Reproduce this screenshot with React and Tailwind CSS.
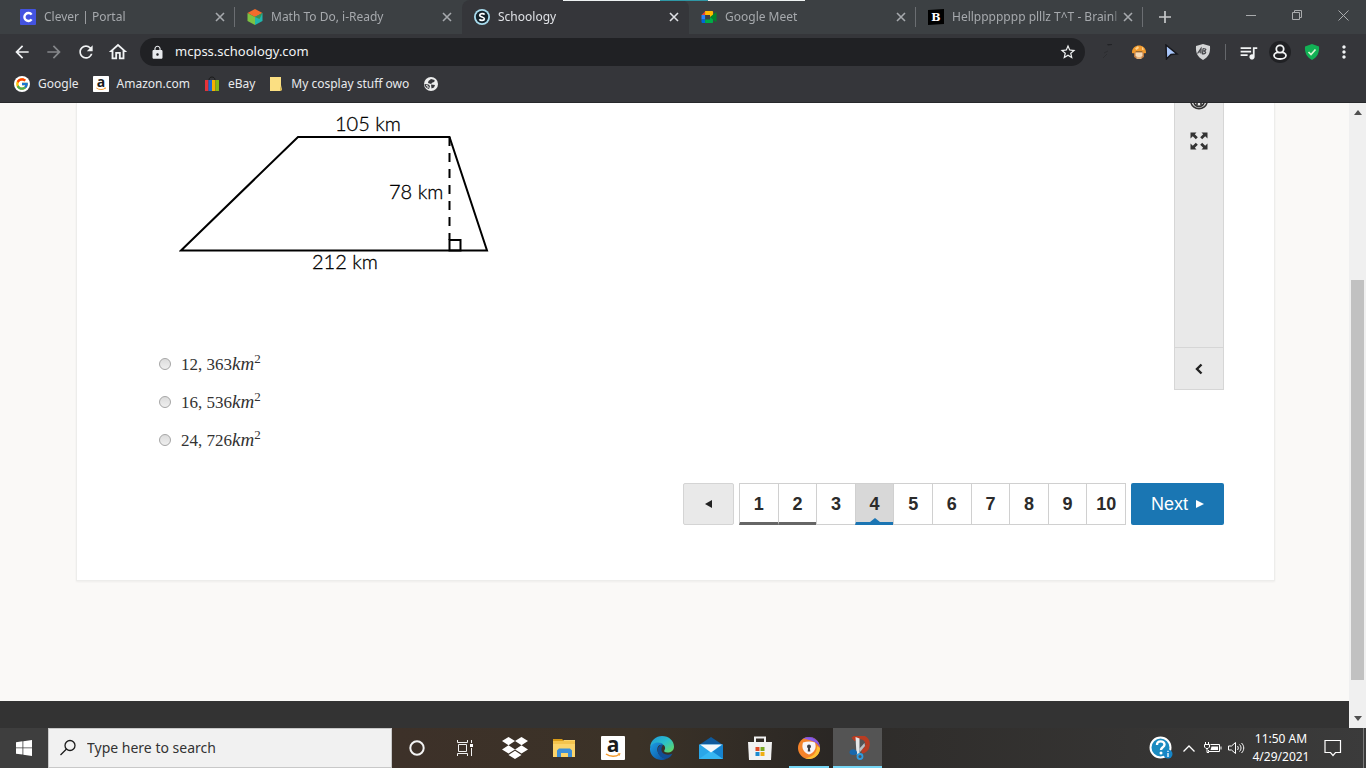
import { useState } from "react";
import { FcGoogle } from "react-icons/fc";
import { FaDropbox } from "react-icons/fa";
import {
  MdArrowBack,
  MdArrowForward,
  MdRefresh,
  MdOutlineHome,
  MdLock,
  MdStarBorder,
  MdQueueMusic,
  MdMoreVert,
} from "react-icons/md";

/* ---------- favicons ---------- */

const CleverIcon = () => (
  <svg width="16" height="16" viewBox="0 0 16 16">
    <rect width="16" height="16" rx="1" fill="#4353e0" />
    <path
      d="M11.6 5.6A4 4 0 1 0 11.6 10.4"
      fill="none"
      stroke="#fff"
      strokeWidth="2.4"
    />
  </svg>
);

const ReadyIcon = () => (
  <svg width="16" height="16" viewBox="0 0 16 16">
    <path d="M8 0l7.5 4L8 8 .5 4z" fill="#f26b2c" />
    <path d="M.5 4L8 8v8L.5 12z" fill="#7cc243" />
    <path d="M15.5 4L8 8v8l7.5-4z" fill="#1fb5ad" />
    <path d="M8 8l7.5-4-3 6z" fill="#3d8f4e" />
  </svg>
);

const SchoologyIcon = () => (
  <svg width="16" height="16" viewBox="0 0 16 16">
    <circle cx="8" cy="8" r="8" fill="#a9dcee" />
    <circle cx="8" cy="8" r="6.2" fill="#15232b" />
    <path
      d="M10.6 5.6C9.8 4.3 5.9 4.2 5.7 6.2c-.1 2 4.8 1.5 4.7 3.7-.2 2-4 2-5 .3"
      fill="none"
      stroke="#fff"
      strokeWidth="1.7"
    />
  </svg>
);

const MeetIcon = () => (
  <svg width="16" height="16" viewBox="0 0 16 16">
    <path d="M.5 6L4.5 2v4z" fill="#ea4335" />
    <path d="M.5 6h3.6v4.5H.5z" fill="#2684fc" />
    <path d="M.5 10.5h3.6V14H1.5a1 1 0 0 1-1-1z" fill="#0066da" />
    <path d="M4.1 2h7a1 1 0 0 1 1 1v4L9 8.5V6H4.1z" fill="#ffba00" />
    <path d="M4.1 10.5H9V8.5l3.1 1V13a1 1 0 0 1-1 1h-7z" fill="#00ac47" />
    <path d="M9 8l5.6-4.6c.4-.3.9 0 .9.5v8.4c0 .5-.5.7-.9.4z" fill="#00832d" />
  </svg>
);

const BrainlyIcon = () => (
  <svg width="16" height="16" viewBox="0 0 16 16">
    <path d="M0 1l16-1v15L0 16z" fill="#000" />
    <text
      x="8"
      y="12"
      textAnchor="middle"
      fontFamily="DejaVu Serif, serif"
      fontWeight="700"
      fontSize="11"
      fill="#fff"
    >
      B
    </text>
  </svg>
);

const AmazonIcon = ({ size }) => (
  <svg width={size} height={size} viewBox="0 0 24 24" overflow="visible">
    <rect width="24" height="24" rx="1" fill="#fff" />
    <text
      x="12"
      y="16"
      textAnchor="middle"
      fontFamily="Open Sans, sans-serif"
      fontWeight="700"
      fontSize="21"
      fill="#1b1b1b"
    >
      a
    </text>
    <path d="M5 18c4 3 10 3 13 .5" fill="none" stroke="#f59b2c" strokeWidth="1.5" />
    <path d="M16.5 17.5l3-.4-.8 2.8z" fill="#f59b2c" />
  </svg>
);

const EbayIcon = () => (
  <svg width="16" height="16" viewBox="0 0 16 16">
    <path d="M5 4c0-4 6-4 6 0" fill="none" stroke="#1b1b1b" strokeWidth="1" />
    <path d="M1 4h3.5v11H1z" fill="#e53238" />
    <path d="M4.5 4H8v11H4.5z" fill="#1f66d0" />
    <path d="M8 4h3.5v11H8z" fill="#f5af02" />
    <path d="M11.5 4H15v11h-3.5z" fill="#86b817" />
  </svg>
);

const NoteIcon = () => (
  <svg width="14" height="16" viewBox="0 0 14 16">
    <path d="M1 1h11v8l1 5-2 1H1z" fill="#fbdf82" />
    <path d="M11 10l2 4-2 1z" fill="#d9b851" />
  </svg>
);

const GlobeIcon = () => (
  <svg width="16" height="16" viewBox="0 0 16 16">
    <circle cx="8" cy="8" r="7" fill="#eceded" />
    <path d="M8 3l3.5 1c.5 1.500-.5 2.500-2 2.500L8 8 5 7l.5-2z" fill="#35363a" />
    <path d="M1.500 8l4 .5L7 10l-1 3C3.500 12.500 1.500 10.500 1.500 8z" fill="#35363a" />
    <path d="M8 8.500l4 .5-1 2.500-2.500 1z" fill="#35363a" />
    <path d="M3 9.500l2 .5v2" fill="none" stroke="#eceded" />
  </svg>
);

/* ---------- toolbar extensions ---------- */

const DimExtIcon = () => (
  <svg width="16" height="16" viewBox="0 0 16 16">
    <path d="M8 0l5-.5V1L9 1.500z" fill="#222326" />
    <path d="M4 14l4-4M5 9l4-2" stroke="#2c2d30" strokeWidth="1" />
  </svg>
);

const MushroomIcon = () => (
  <svg width="16" height="16" viewBox="0 0 16 16">
    <path d="M3 8h10v4.500c-1 3-9 3-10 0z" fill="#c07c42" />
    <path d="M4.500 8.500h7V12c-1 1.500-6 1.500-7 0z" fill="#f6d9b4" />
    <path d="M5.500 13h5v2h-5z" fill="#e8b37c" />
    <path d="M1 9C.5-1 15.500-1 15 9c-2 1-3-.5-4-1.500H5C4 8.500 3 10 1 9z" fill="#f09a2e" />
    <path d="M4 4.500l3-2.500 1 2-2.500 2zM11 2.500l2 3-2 .5z" fill="#ffd28c" />
  </svg>
);

const CursorIcon = () => (
  <svg width="16" height="16" viewBox="0 0 16 16">
    <path d="M3 1l11 9-6 .5L3.500 15z" fill="#a9c7fb" stroke="#16171c" strokeWidth="1.500" />
  </svg>
);

const AdShieldIcon = () => (
  <svg width="16" height="16" viewBox="0 0 16 16">
    <path d="M8 0l7 2c.5 7-1.500 11-7 14C2.500 13 .5 9 1 2z" fill="#d4d5d6" />
    <path
      d="M2.500 9.500l3.500-5v5M4 8h2M8 4.500L7.500 10c4 0 4-2.500 1-3 3-.5 3.500-2.500-.5-2.500"
      fill="none"
      stroke="#46474b"
      strokeWidth="1.200"
    />
  </svg>
);

const ProfileIcon = () => (
  <svg width="22" height="22" viewBox="0 0 22 22">
    <circle cx="11" cy="11" r="11" fill="#202124" />
    <ellipse cx="11" cy="14.500" rx="6" ry="3.500" fill="#202124" stroke="#f1f3f4" strokeWidth="1.800" />
    <circle cx="11" cy="8" r="3.700" fill="#202124" stroke="#f1f3f4" strokeWidth="1.800" />
  </svg>
);

const CheckShieldIcon = () => (
  <svg width="16" height="16" viewBox="0 0 16 16">
    <path d="M8 0l7 2.500c.5 6-1.500 10.500-7 13.500C2.500 13 .5 8.500 1 2.500z" fill="#12b155" />
    <path d="M4.500 8l2.500 2.500 4.500-5" fill="none" stroke="#d8f5d0" strokeWidth="1.700" />
  </svg>
);

/* ---------- taskbar ---------- */

const WindowsIcon = () => (
  <svg width="16" height="16" viewBox="0 0 16 16" fill="#fff">
    <path d="M0 2.200l6.500-.9v6.200H0zM7.300 1.200L16 0v7.500H7.300zM0 8.300h6.500v6.300L0 13.700zM7.300 8.300H16V16l-8.700-1.200z" />
  </svg>
);

const SearchIcon = () => (
  <svg width="18" height="18" viewBox="0 0 18 18" fill="none" stroke="#1b1b1b" strokeWidth="1.300">
    <circle cx="11" cy="6.500" r="5" />
    <path d="M7.500 10L1.500 16" />
  </svg>
);

const CortanaIcon = () => (
  <svg width="18" height="18" viewBox="0 0 18 18">
    <circle cx="9" cy="9" r="6.700" fill="none" stroke="#f4f4f4" strokeWidth="2" />
  </svg>
);

const TaskViewIcon = () => (
  <svg width="18" height="16" viewBox="0 0 18 16" fill="none" stroke="#f0f0f0">
    <path d="M.5 0v2.500h10V0M1.500 4.500h8v7h-8zM.5 16v-2.500h10V16M14.500 0v3M14.500 8v8" />
    <path d="M13 4h3v3h-3z" fill="#fff" stroke="none" />
  </svg>
);

const FolderIcon = () => (
  <svg width="22" height="20" viewBox="0 0 22 20">
    <path d="M0 1h9l2 2H0z" fill="#d99b17" />
    <path d="M0 3h10l1-1h11v17H0z" fill="#fbd46b" />
    <path d="M0 3h22v3H0z" fill="#f4c44e" />
    <path d="M4 19v-6.500L6 10.500h11l2 2V19h-4v-4H8v4z" fill="#3d8fd8" />
  </svg>
);

const EdgeIcon = () => (
  <svg width="24" height="24" viewBox="0 0 24 24">
    <defs>
      <linearGradient id="edgeTop" x1="0" y1="0" x2="1" y2="1">
        <stop offset="0" stopColor="#1e95dd" />
        <stop offset="0.5" stopColor="#2bc0c9" />
        <stop offset="1" stopColor="#69dc55" />
      </linearGradient>
      <linearGradient id="edgeSide" x1="0" y1="0" x2="1" y2="1">
        <stop offset="0" stopColor="#1d9ee4" />
        <stop offset="1" stopColor="#0a4c9c" />
      </linearGradient>
    </defs>
    <path d="M0 11C1 4 6 0 12 0c7 0 12 5 12 10.500 0 4-3 6-6.500 6-3 0-4-1-3-2.500 1.500-2 .5-6-4.500-6-5 0-8.500 2-10 3z" fill="url(#edgeTop)" />
    <path d="M0 12c1.500-6 11-7 13.500-3C9 7.500 6.500 11 7.500 15c1 4.500 5 7.500 9.500 7.500-2 1.200-4 1.500-6 1.500C4 23.500-.5 18 0 12z" fill="url(#edgeSide)" />
    <path d="M12 8.500c-4 1-5 5-4 8 1.500 4.500 6 6.500 9.500 6 2.500-1 4-3 5-5-4 2.500-12 1-11-5 .2-1.500 1-2.500 1.500-3.500z" fill="#124e95" />
  </svg>
);

const MailIcon = () => (
  <svg width="24" height="24" viewBox="0 0 24 24">
    <path d="M0 9l12-8 12 8v4H0z" fill="#0f5a9c" />
    <path d="M0 8.500h24V23H0z" fill="#2aa6e8" />
    <path d="M24 8.500V23H3z" fill="#1683cf" />
    <path d="M0 23l12-8.500L24 23z" fill="#36b6f2" />
    <path d="M1 8.500h22l-11 8z" fill="#f4f8fb" />
  </svg>
);

const StoreIcon = () => (
  <svg width="24" height="24" viewBox="0 0 24 24">
    <path d="M7 7V1.500h10V7" fill="none" stroke="#f2f2f2" strokeWidth="2" />
    <path d="M0 6h24l-1 18H1z" fill="#f2f2f2" />
    <path d="M7.500 11h4v4h-4z" fill="#e04a26" />
    <path d="M12.500 11h4v4h-4z" fill="#7aa922" />
    <path d="M7.500 16h4v4h-4z" fill="#1c8bd0" />
    <path d="M12.500 16h4v4h-4z" fill="#f0ae12" />
  </svg>
);

const SecureBrowserIcon = () => (
  <svg width="24" height="24" viewBox="0 0 24 24">
    <circle cx="12" cy="12" r="11" fill="#f5832a" />
    <path d="M8 1.700a11 11 0 0 1 15 10.300c-2-5-7-8-15-10.300z" fill="#6b4bd6" />
    <path d="M6 2.500c6-2.500 14 0 16.500 6.500C20 6 13 4 6 2.500z" fill="#8a5ce8" />
    <path d="M23 12a11 11 0 0 1-15 10.300C15 21 20 18 20 10z" fill="#fbc034" />
    <path d="M6 6.500c4-1.500 8-1.500 12 0 2 6-1 10-6 12C7 16.500 4 12.500 6 6.500z" fill="#f7f3f7" />
    <circle cx="12" cy="10.500" r="2" fill="#3f3f46" />
    <path d="M11.200 11h1.600l.5 4.500h-2.600z" fill="#3f3f46" />
  </svg>
);

const SnipIcon = () => (
  <svg width="24" height="24" viewBox="0 0 24 24">
    <path
      d="M7 3.500C13-2 22 1.500 21.500 9c-.5 4-3 6-6 6.500"
      fill="none"
      stroke="#b83c22"
      strokeWidth="4.500"
    />
    <path d="M9.500 1l4 1.500v16h-3z" fill="#e4e6e8" />
    <path d="M13 13l5.500-6 .5 3-5 6z" fill="#b9bdc1" />
    <path d="M11 16c-2-4-7-3-7.500 0s4 4 7.500 2z" fill="#1768ad" />
    <circle cx="14" cy="20.500" r="2.500" fill="none" stroke="#2e9be0" strokeWidth="1.800" />
  </svg>
);

const HelpIcon = () => (
  <svg width="24" height="24" viewBox="0 0 24 24">
    <circle cx="11.500" cy="11.500" r="10" fill="#1b8bc0" stroke="#fff" strokeWidth="2" />
    <path
      d="M8 9c0-5 7.500-4.500 7.500-.5 0 3-3.500 2.500-3.500 5.500"
      fill="none"
      stroke="#fff"
      strokeWidth="2.400"
    />
    <circle cx="12" cy="17" r="1.500" fill="#fff" />
    <circle cx="19" cy="18" r="4.500" fill="#1686c8" />
    <path d="M19 17v4M19 14.800v1.200" stroke="#fff" strokeWidth="1.300" />
  </svg>
);

const BatteryIcon = () => (
  <svg width="18" height="12" viewBox="0 0 18 12" fill="none" stroke="#fff">
    <path d="M6.500 2.500h9v7H4.500V8M17 4.500v3" />
    <path d="M7.500 4.500H14v3.500H6.500z" fill="#fff" stroke="none" />
    <path d="M1.500 0v2.500M4.500 0v2.500" />
    <path d="M.5 2.500h5v2.500L4 6.500H2L.5 5zM3 6.500v4h2" />
  </svg>
);

const SpeakerIcon = () => (
  <svg width="18" height="14" viewBox="0 0 18 14" fill="none" stroke="#fff">
    <path d="M.5 5h3L7.500 1.500v11L3.500 9h-3zM9.500 5c1 1.200 1 2.800 0 4M11.500 3.500c2 2 2 5 0 7M13.500 2c3 3 3 7 0 10" />
  </svg>
);

const NotificationIcon = () => (
  <svg width="18" height="18" viewBox="0 0 18 18" fill="none" stroke="#fff" strokeWidth="1.200">
    <path d="M1 1.500h15.500v12h-5l-2.500 3-2.500-3H1z" />
  </svg>
);

/* ---------- data ---------- */

const tabs = [
  { id: "clever", title: "Clever | Portal", icon: <CleverIcon /> },
  { id: "iready", title: "Math To Do, i-Ready", icon: <ReadyIcon /> },
  { id: "schoology", title: "Schoology", icon: <SchoologyIcon /> },
  { id: "meet", title: "Google Meet", icon: <MeetIcon /> },
  { id: "brainly", title: "Hellppppppp plllz T^T - Brainl", icon: <BrainlyIcon /> },
];

const bookmarks = [
  {
    label: "Google",
    icon: (
      <span className="rounded-full bg-white p-px">
        <FcGoogle size={14} />
      </span>
    ),
  },
  { label: "Amazon.com", icon: <AmazonIcon size={16} /> },
  { label: "eBay", icon: <EbayIcon /> },
  { label: "My cosplay stuff owo", icon: <NoteIcon /> },
];

const answers = ["12, 363", "16, 536", "24, 726"];

const pages = [1, 2, 3, 4, 5, 6, 7, 8, 9, 10];

const taskbarApps = [
  { name: "Cortana", icon: <CortanaIcon /> },
  { name: "Task View", icon: <TaskViewIcon /> },
  { name: "Dropbox", icon: <FaDropbox size={26} color="#fff" /> },
  { name: "File Explorer", icon: <FolderIcon /> },
  { name: "Amazon", icon: <AmazonIcon size={24} /> },
  { name: "Edge", icon: <EdgeIcon /> },
  { name: "Mail", icon: <MailIcon /> },
  { name: "Store", icon: <StoreIcon /> },
  { name: "Secure Browser", icon: <SecureBrowserIcon />, running: true },
  { name: "Snipping Tool", icon: <SnipIcon />, running: true, focused: true },
];

/* ---------- components ---------- */

function ToolButton({ label, children }) {
  return (
    <button aria-label={label} className="flex h-7 w-8 shrink-0 items-center justify-center">
      {children}
    </button>
  );
}

function CloseMark() {
  return (
    <svg width="10" height="10" viewBox="0 0 10 10" stroke="currentColor" strokeWidth="1.600">
      <path d="M1 1l8 8M9 1L1 9" />
    </svg>
  );
}

function TabStrip() {
  const [active, setActive] = useState("schoology");

  return (
    <div className="relative flex h-[34px] items-stretch bg-[#3c4043] pl-2">
      {tabs.map((tab, i) => {
        const isActive = tab.id === active;
        const hasDivider = !isActive && tabs[i + 1]?.id !== active;
        return (
          <div
            key={tab.id}
            className={`flex w-[227px] min-w-0 items-center pl-3 ${
              isActive ? "rounded-t-lg bg-[#35363a] text-[#dfe1e5]" : "text-[#a6a9ad]"
            }`}
          >
            <button
              onClick={() => setActive(tab.id)}
              className="flex min-w-0 flex-1 items-center gap-2 text-left text-xs"
            >
              <span className="shrink-0">{tab.icon}</span>
              <span className="flex-1 overflow-hidden whitespace-nowrap mask-r-from-95%">
                {tab.title}
              </span>
            </button>
            <button aria-label="Close tab" className="mr-1.5 flex h-5 w-4 items-center justify-center">
              <CloseMark />
            </button>
            <span className={`h-5 w-px ${hasDivider ? "bg-[#6b6e72]" : ""}`} />
          </div>
        );
      })}
      <button aria-label="New tab" className="ml-4 flex items-center text-[#c6c8ca]">
        <svg width="12" height="12" viewBox="0 0 12 12" stroke="currentColor" strokeWidth="1.700">
          <path d="M6 0v12M0 6h12" />
        </svg>
      </button>
      <div className="ml-auto flex pb-1 text-[#a9abad]">
        <button aria-label="Minimize" className="flex w-[46px] items-center justify-center">
          <svg width="10" height="10" viewBox="0 0 10 10" stroke="currentColor">
            <path d="M0 5.500h10" />
          </svg>
        </button>
        <button aria-label="Restore" className="flex w-[46px] items-center justify-center">
          <svg width="10" height="10" viewBox="0 0 10 10" fill="none" stroke="currentColor">
            <path d="M.5 2.500h7v7h-7zM2.500 2.500v-2h7v7h-2" />
          </svg>
        </button>
        <button aria-label="Close" className="flex w-[46px] items-center justify-center">
          <svg width="11" height="11" viewBox="0 0 11 11" stroke="currentColor">
            <path d="M.5.5l10 10M10.500.5l-10 10" />
          </svg>
        </button>
      </div>
      {/* screen share bar peeking over the window */}
      <div className="absolute left-1/2 top-0 flex h-px w-[242px] -translate-x-[120px] justify-center bg-[#eef2f2]">
        <span className="w-12 bg-[#2f97a5]" />
      </div>
    </div>
  );
}

function Toolbar() {
  return (
    <div className="flex h-9 items-center bg-[#35363a] px-1.5 text-[#f1f3f4]">
      <ToolButton label="Back">
        <MdArrowBack size={20} />
      </ToolButton>
      <ToolButton label="Forward">
        <MdArrowForward size={20} className="text-[#85878a]" />
      </ToolButton>
      <ToolButton label="Reload">
        <MdRefresh size={20} />
      </ToolButton>
      <ToolButton label="Home">
        <MdOutlineHome size={22} />
      </ToolButton>
      <div className="mx-1.5 flex h-7 flex-1 items-center rounded-full bg-[#202124] pl-2.5 pr-2">
        <MdLock size={15} className="text-[#e8eaed]" />
        <input
          aria-label="Address"
          defaultValue="mcpss.schoology.com"
          className="ml-2.5 min-w-0 flex-1 bg-transparent text-[13px] text-[#f1f3f4] outline-none"
        />
        <button aria-label="Bookmark this tab">
          <MdStarBorder size={18} />
        </button>
      </div>
      <ToolButton label="Extension">
        <DimExtIcon />
      </ToolButton>
      <ToolButton label="Mushroom">
        <MushroomIcon />
      </ToolButton>
      <ToolButton label="Custom cursor">
        <CursorIcon />
      </ToolButton>
      <ToolButton label="Ad blocker">
        <AdShieldIcon />
      </ToolButton>
      <span className="mx-1.5 h-4 w-px bg-[#65676b]" />
      <ToolButton label="Media controls">
        <MdQueueMusic size={21} />
      </ToolButton>
      <ToolButton label="Profile">
        <ProfileIcon />
      </ToolButton>
      <ToolButton label="Protection">
        <CheckShieldIcon />
      </ToolButton>
      <ToolButton label="Menu">
        <MdMoreVert size={20} />
      </ToolButton>
    </div>
  );
}

function BookmarksBar() {
  return (
    <div className="flex h-[33px] items-center gap-3.5 border-b border-[#27282b] bg-[#35363a] pb-1 pl-3.5 text-xs text-[#e8eaed]">
      {bookmarks.map((bookmark) => (
        <a key={bookmark.label} href="#" className="flex items-center gap-2 whitespace-nowrap">
          {bookmark.icon}
          {bookmark.label}
        </a>
      ))}
      <a href="#" aria-label="Bookmark">
        <GlobeIcon />
      </a>
    </div>
  );
}

function Trapezoid() {
  return (
    <svg
      width="310"
      height="166"
      viewBox="179 109 310 166"
      fontFamily="Lato, sans-serif"
      fontSize="20"
      fontWeight="300"
      fill="#000"
      stroke="#000"
    >
      <path d="M298 137h151.500L487 250.500H181z" fill="none" strokeWidth="2" />
      <path d="M449.500 137v103" strokeWidth="2" strokeDasharray="9 7" />
      <path d="M449.500 240h11v10.500h-11z" fill="none" strokeWidth="2" />
      <g strokeWidth="0.3">
        <text x="335" y="131">105 km</text>
        <text x="389" y="199">78 km</text>
        <text x="312" y="269">212 km</text>
      </g>
    </svg>
  );
}

function Question() {
  const [answer, setAnswer] = useState(null);

  return (
    <div className="pl-[82px] pt-1.5">
      <div className="pl-5">
        <Trapezoid />
      </div>
      <div className="pt-[70px]">
        {answers.map((value) => (
          <label key={value} className="flex h-[38px] items-center gap-2.5 text-[#333]">
            <input
              type="radio"
              name="area"
              checked={answer === value}
              onChange={() => setAnswer(value)}
              className="h-3 w-3 appearance-none rounded-full border border-[#a5a5a5] bg-gradient-to-b from-[#dcdcdc] to-[#efefef] checked:bg-[#555]"
            />
            <span className="font-['Liberation_Serif',serif] text-[17px] leading-6">
              {value}
              <i className="text-[19px]">km</i>
              <sup className="text-[13px]">2</sup>
            </span>
          </label>
        ))}
      </div>
    </div>
  );
}

function SidePanel() {
  return (
    <div className="flex h-[287px] w-[50px] flex-col items-center border border-t-0 border-[#d6d6d6] bg-[#e9e9e9]">
      <button aria-label="Accessibility" className="h-[7px] overflow-hidden">
        <svg width="18" height="7" viewBox="0 0 18 7" fill="none" stroke="#333">
          <path d="M1 0a8.500 8.500 0 0 0 16 0" strokeWidth="1.600" />
          <path d="M4 0c1.500 4.500 8.500 4.500 10 0M7 0v2M11 0v2" strokeWidth="1.600" />
        </svg>
      </button>
      <button aria-label="Full screen" className="mt-5 flex h-[22px] items-center">
        <svg width="18" height="18" viewBox="0 0 18 18" fill="#333">
          <path d="M.5.5h6L4.800 2.200l3 3L5.800 7.200l-3-3L.5 6.500z" />
          <path d="M17.500.5v6l-2.300-2.300-3 3-2-2 3-3L11.500.5z" />
          <path d="M.5 17.500v-6l2.300 2.300 3-3 2 2-3 3 1.700 1.700z" />
          <path d="M17.500 17.500h-6l1.700-1.700-3-3 2-2 3 3 2.300-2.300z" />
        </svg>
      </button>
      <button
        aria-label="Collapse panel"
        className="mt-auto flex h-[42px] w-full items-center justify-center border-t border-[#d6d6d6]"
      >
        <svg width="8" height="12" viewBox="0 0 8 12" fill="none" stroke="#222" strokeWidth="2.400">
          <path d="M6.500 1.500L2 6l4.500 4.500" />
        </svg>
      </button>
    </div>
  );
}

function Pagination() {
  const [current, setCurrent] = useState(4);

  return (
    <nav className="flex justify-end gap-[5px] text-lg text-[#2b2b2b]">
      <button
        aria-label="Previous"
        className="flex h-[42px] w-[51px] items-center justify-center rounded-xs border border-[#d4d4d4] bg-[#e9e9e9]"
      >
        <svg width="7" height="8" viewBox="0 0 7 8" fill="#222">
          <path d="M7 0v8L0 4z" />
        </svg>
      </button>
      <div className="grid w-[387px] grid-cols-10 border-r border-[#d0d0d0]">
        {pages.map((page) => (
          <button
            key={page}
            onClick={() => setCurrent(page)}
            className={`relative flex h-[42px] items-center justify-center border-l border-t border-[#d0d0d0] font-bold ${
              page === current
                ? "border-b-3 border-b-[#1b75b3] bg-[#d8d8d8] pt-0.5"
                : page < 3
                  ? "border-b-3 border-b-[#666] pt-0.5"
                  : "border-b"
            }`}
          >
            {page}
            {page === current && (
              <svg className="absolute bottom-0" width="10" height="4" viewBox="0 0 10 4" fill="#1b75b3">
                <path d="M0 4l5-4 5 4z" />
              </svg>
            )}
          </button>
        ))}
      </div>
      <button className="flex h-[42px] w-[93px] items-center justify-center gap-2 rounded-xs bg-[#1a76b3] text-white">
        Next
        <svg width="8" height="8" viewBox="0 0 8 8" fill="#fff">
          <path d="M0 0l8 4-8 4z" />
        </svg>
      </button>
    </nav>
  );
}

function Scrollbar() {
  return (
    <div className="flex w-[17px] shrink-0 flex-col items-center justify-between bg-[#f0f0f0] py-[7px]">
      <svg width="8" height="5" viewBox="0 0 8 5" fill="#505050">
        <path d="M0 5l4-5 4 5z" />
      </svg>
      <div className="mt-auto mb-9 h-[400px] w-[13px] bg-[#c1c1c1]" />
      <svg width="8" height="5" viewBox="0 0 8 5" fill="#505050">
        <path d="M0 0h8L4 5z" />
      </svg>
    </div>
  );
}

function Taskbar() {
  return (
    <footer className="flex h-10 items-stretch bg-gradient-to-r from-[#3f3f3f] via-[#2a2724] to-[#3b3b3b]">
      <button aria-label="Start" className="flex w-12 items-center justify-center bg-[#3e3e3e]">
        <WindowsIcon />
      </button>
      <label className="flex w-[344px] items-center gap-2.5 border border-[#c8c8c8] bg-[#f1f1f1] pl-2.5">
        <SearchIcon />
        <input
          aria-label="Search"
          placeholder="Type here to search"
          className="min-w-0 flex-1 bg-transparent text-sm outline-none placeholder:text-[#333]"
        />
      </label>
      <div className="flex bg-gradient-to-r from-[#3d3129] via-[#3b3227] to-[#262423]">
        {taskbarApps.map((app) => (
          <button
            key={app.name}
            aria-label={app.name}
            className={`relative flex w-[49px] items-center justify-center ${
              app.focused ? "bg-[#545454]" : ""
            }`}
          >
            {app.icon}
            {app.running && (
              <span
                className={`absolute bottom-0 h-0.5 bg-[#76d6f5] ${app.focused ? "w-full" : "w-10"}`}
              />
            )}
          </button>
        ))}
      </div>
      <div className="ml-auto flex items-center text-white">
        <button aria-label="Help" className="flex w-8 justify-center">
          <HelpIcon />
        </button>
        <button aria-label="Show hidden icons" className="flex w-6 justify-center">
          <svg width="12" height="7" viewBox="0 0 12 7" fill="none" stroke="#fff" strokeWidth="1.300">
            <path d="M.5 6.500L6 1l5.500 5.500" />
          </svg>
        </button>
        <button aria-label="Battery" className="flex w-6 justify-center">
          <BatteryIcon />
        </button>
        <button aria-label="Volume" className="flex w-6 justify-center">
          <SpeakerIcon />
        </button>
        <div className="w-16 text-center text-xs leading-[18px]">
          <div>11:50 AM</div>
          <div>4/29/2021</div>
        </div>
        <button aria-label="Notifications" className="flex w-10 justify-center">
          <NotificationIcon />
        </button>
        <span className="ml-2.5 mr-0.5 h-10 w-px bg-[#7a7a7a]" />
      </div>
    </footer>
  );
}

export default function App() {
  return (
    <div className="flex h-screen flex-col overflow-hidden font-['Noto_Sans',sans-serif]">
      <header>
        <TabStrip />
        <Toolbar />
        <BookmarksBar />
      </header>
      <div className="flex min-h-0 flex-1">
        <main className="flex flex-1 flex-col bg-[#faf9f7] font-['Liberation_Sans',sans-serif]">
          <div className="ml-[76px] mr-[74px] border border-t-0 border-[#ededeb] bg-white pb-[55px] pr-[50px] shadow-xs">
            <div className="flex items-start justify-between">
              <Question />
              <SidePanel />
            </div>
            <div className="pt-6">
              <Pagination />
            </div>
          </div>
          <div className="mt-auto h-[27px] bg-[#333]" />
        </main>
        <Scrollbar />
      </div>
      <Taskbar />
    </div>
  );
}
